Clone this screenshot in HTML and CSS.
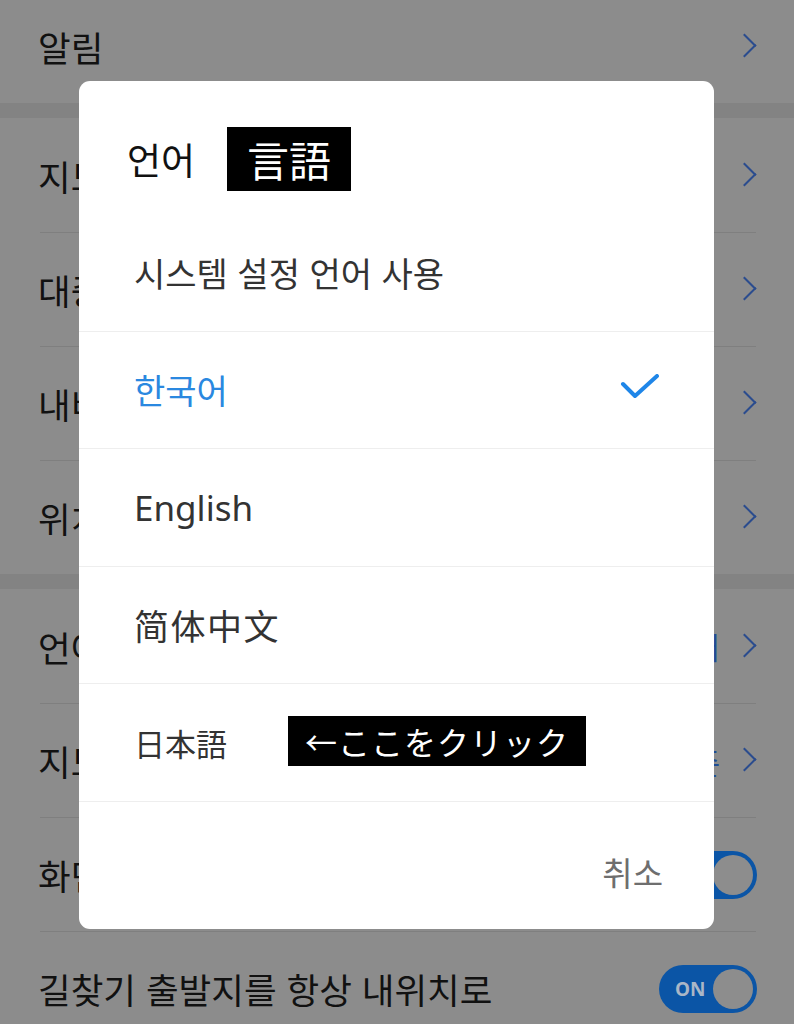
FILE: index.html
```html
<!DOCTYPE html>
<html lang="ko">
<head>
<meta charset="utf-8">
<title>언어 설정</title>
<link rel="stylesheet" href="styles.css">
</head>
<body>
<div class="screen">
  <div class="settings">
    <div class="row first"><span class="label">알림</span><span class="chev"></span></div>
    <div class="band"></div>
    <div class="row"><span class="label">지도 설정</span><span class="chev"></span></div>
    <div class="row sep"><span class="label">대중교통 설정</span><span class="chev"></span></div>
    <div class="row sep"><span class="label">내비게이션 설정</span><span class="chev"></span></div>
    <div class="row sep"><span class="label">위치 정보 설정</span><span class="chev"></span></div>
    <div class="band"></div>
    <div class="row"><span class="label">언어</span><span class="value">한국어</span><span class="chev"></span></div>
    <div class="row sep"><span class="label">지도 글자 크기</span><span class="value">표준</span><span class="chev"></span></div>
    <div class="row sep"><span class="label">화면 꺼짐 방지</span><span class="toggle"><span class="on">ON</span><span class="knob"></span></span></div>
    <div class="row sep"><span class="label">길찾기 출발지를 항상 내위치로</span><span class="toggle"><span class="on">ON</span><span class="knob"></span></span></div>
  </div>

  <div class="dialog">
    <div class="dialog-title">
      <span class="title">언어</span>
      <span class="tag" lang="ja">言語</span>
    </div>
    <ul class="options">
      <li class="option"><span class="text">시스템 설정 언어 사용</span></li>
      <li class="option selected"><span class="text">한국어</span>
        <svg class="check" width="40" height="30" viewBox="0 0 40 30"><path d="M3 10 L15 22 L37 2" fill="none" stroke="#1f86e8" stroke-width="4" stroke-linecap="round" stroke-linejoin="round"/></svg>
      </li>
      <li class="option"><span class="text latin">English</span></li>
      <li class="option" lang="zh-CN"><span class="text sc">简体中文</span></li>
      <li class="option" lang="ja"><span class="text jp">日本語</span><span class="note">←ここをクリック</span></li>
    </ul>
    <div class="dialog-footer"><span class="cancel">취소</span></div>
  </div>
</div>
</body>
</html>
```

FILE: styles.css
```css
html, body {
  margin: 0;
  padding: 0;
}
body {
  font-family: "Noto Sans CJK KR", "Noto Sans", sans-serif;
  background: #8c8c8c;
}
.screen {
  position: relative;
  width: 794px;
  height: 1024px;
  overflow: hidden;
  background: #8c8c8c;
}
.settings {
  margin-top: -11px;
}
.row {
  height: 114px;
  margin: 0 38px;
  display: flex;
  align-items: center;
  box-sizing: border-box;
}
.row.sep {
  border-top: 1px solid #7f7f7f;
  margin-left: 40px;
}
.row.sep .label {
  margin-left: -2px;
}
.band {
  height: 15px;
  background: #838383;
}
.label {
  flex: 1;
  font-size: 35.5px;
  color: #111;
  white-space: nowrap;
}
.value {
  font-size: 30px;
  color: #1e4c95;
  margin-right: 22px;
}
.chev {
  width: 14px;
  height: 27px;
  position: relative;
}
.chev::before {
  content: "";
  position: absolute;
  left: -6px;
  top: 4px;
  width: 17px;
  height: 17px;
  border-right: 2.5px solid #2b4c8e;
  border-top: 2.5px solid #2b4c8e;
  transform: rotate(45deg);
  box-sizing: border-box;
}
.toggle {
  width: 98px;
  height: 48px;
  border-radius: 24px;
  background: #0b55a6;
  display: flex;
  align-items: center;
  justify-content: space-between;
  box-sizing: border-box;
  padding: 0 4px 0 16px;
  margin-right: -1px;
}
.on {
  font-family: "Noto Sans", sans-serif;
  font-weight: 700;
  font-size: 19px;
  color: #aab6c6;
}
.knob {
  width: 40px;
  height: 40px;
  border-radius: 50%;
  background: #8d8d8d;
}

/* dialog */
.dialog {
  position: absolute;
  left: 79px;
  top: 81px;
  width: 635px;
  height: 848px;
  background: #fff;
  border-radius: 11px;
  display: flex;
  flex-direction: column;
}
.dialog-title {
  height: 133px;
  display: flex;
  align-items: center;
  padding: 22px 0 0 48px;
  box-sizing: border-box;
}
.title {
  font-size: 37px;
  color: #111;
  font-weight: 400;
}
.tag {
  margin-left: 32px;
  width: 124px;
  height: 64px;
  background: #000;
  color: #fff;
  font-family: "Noto Sans CJK JP", sans-serif;
  font-size: 42px;
  display: flex;
  align-items: center;
  justify-content: center;
  box-sizing: border-box;
}
.options {
  list-style: none;
  margin: 0;
  padding: 0;
}
.option {
  height: 117.5px;
  display: flex;
  align-items: center;
  justify-content: space-between;
  padding: 0 56px 0 55px;
  box-sizing: border-box;
  color: #333;
  border-bottom: 1.5px solid #eeeeee;
  position: relative;
}
.text {
  font-size: 34px;
}
.option.selected {
  color: #2a88e0;
}
.text.latin {
  font-family: "Noto Sans", sans-serif;
  font-size: 35px;
}
.text.sc {
  font-family: "Noto Sans CJK SC", sans-serif;
  font-size: 35px;
  letter-spacing: 1.5px;
}
.text.jp {
  font-family: "Noto Sans CJK JP", sans-serif;
  font-size: 31px;
}
.check {
  margin-right: -2px;
  margin-top: -2px;
}
.note {
  position: absolute;
  left: 209px;
  top: 32px;
  width: 298px;
  height: 50px;
  background: #000;
  color: #fff;
  font-family: "Noto Sans CJK JP", sans-serif;
  font-size: 32px;
  display: flex;
  align-items: center;
  padding-left: 17px;
  box-sizing: border-box;
  letter-spacing: 1px;
}
.dialog-footer {
  flex: 1;
  display: flex;
  align-items: center;
  justify-content: flex-end;
  padding-right: 51px;
  padding-top: 14px;
}
.cancel {
  font-size: 33px;
  color: #6e6e6e;
}
```
